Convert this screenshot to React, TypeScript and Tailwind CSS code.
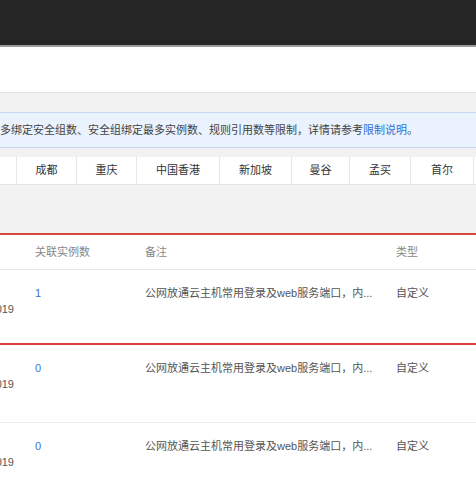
const tabs = [
  { label: '', w: 'w-[17px]' },
  { label: '成都', w: 'w-[60px]' },
  { label: '重庆', w: 'w-[60px]' },
  { label: '中国香港', w: 'w-[83px]' },
  { label: '新加坡', w: 'w-[72px]' },
  { label: '曼谷', w: 'w-[58px]' },
  { label: '孟买', w: 'w-[61px]' },
  { label: '首尔', w: 'w-[63px]' },
  { label: '', w: 'w-[40px]' },
];

function Row({ count, h }: { count: string; h: string }) {
  return (
    <div className={`flex ${h} text-[11px]`}>
      <div className="w-[35px] pt-[31px] flex justify-end pr-[21px] overflow-hidden">
        <span className="whitespace-nowrap text-[#555] leading-4">2019</span>
      </div>
      <div className="w-[110px] pt-[15px] text-[#3d6fd0] leading-4">{count}</div>
      <div className="w-[251px] pt-[15px] text-[#555] leading-4 whitespace-nowrap">
        公网放通云主机常用登录及web服务端口，内...
      </div>
      <div className="flex-1 pt-[15px] text-[#555] leading-4">自定义</div>
    </div>
  );
}

export default function App() {
  return (
    <div className="w-[476px] h-[477px] overflow-hidden bg-white font-['Liberation_Sans','Noto_Sans_CJK_SC',sans-serif]">
      <div className="h-[45px] bg-[#262626]" />
      <div className="h-[2px] bg-[#9a9a9a]" />
      <div className="h-[46px] bg-white border-b border-[#e4e4e4]" />
      <div className="bg-[#f2f2f2] pt-[19px] pb-[9px]">
        <div className="h-[36px] bg-[#e9f2fd] border-y border-[#c5d7f0] flex items-center whitespace-nowrap text-[11px] text-[#444]">
          多绑定安全组数、安全组绑定最多实例数、规则引用数等限制，详情请参考
          <span className="text-[#2f6fd9]">限制说明</span>。
        </div>
      </div>
      <div className="flex h-[28px] border-b border-[#e4e4e4] bg-[#f2f2f2]">
        {tabs.map((t, i) => (
          <div
            key={i}
            className={`${t.w} shrink-0 bg-white border-r border-[#e6e6e6] flex items-center justify-center text-[11px] text-[#333]`}
          >
            {t.label}
          </div>
        ))}
      </div>
      <div className="h-[48px] bg-[#f2f2f2]" />
      <div className="h-[2px] bg-[#d9453b]" />
      <div className="flex h-[35px] items-center border-b border-[#e8e8e8] text-[11px] text-[#888]">
        <div className="w-[35px]" />
        <div className="w-[110px]">关联实例数</div>
        <div className="w-[251px]">备注</div>
        <div className="flex-1">类型</div>
      </div>
      <Row count="1" h="h-[73px]" />
      <div className="h-[2px] bg-[#d9453b]" />
      <div className="border-b border-[#ececec]">
        <Row count="0" h="h-[77px]" />
      </div>
      <Row count="0" h="h-[60px]" />
    </div>
  );
}
